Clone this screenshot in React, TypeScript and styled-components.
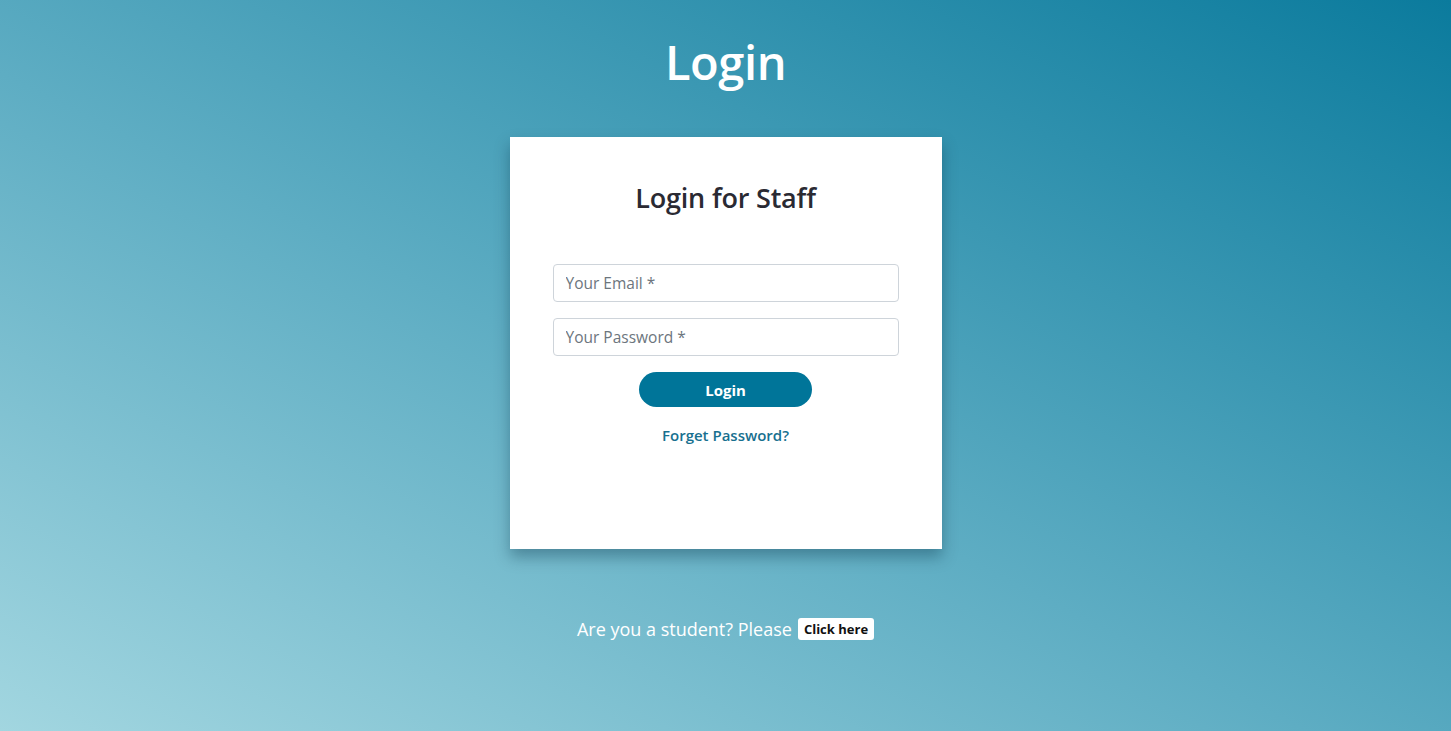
import React from 'react';
import styled, { createGlobalStyle } from 'styled-components';

const GlobalStyle = createGlobalStyle`
	html, body {
		margin: 0;
		padding: 0;
		height: 100%;
	}
	body {
		font-family: 'Open Sans', 'Noto Sans', sans-serif;
	}
	#root {
		min-height: 100vh;
	}
`;

const Page = styled.main`
	min-height: 100vh;
	box-sizing: border-box;
	background: linear-gradient(to top right, #a2d6e0 0%, #5eadc3 45%, #0b7b9d 100%);
	display: flex;
	flex-direction: column;
	align-items: center;
	padding-top: 31px;
`;

const Title = styled.h1`
	margin: 0;
	color: #fff;
	font-size: 47px;
	font-weight: 600;
	line-height: 62px;
	letter-spacing: -0.4px;
`;

const Card = styled.section`
	margin-top: 44px;
	width: 432px;
	height: 412px;
	box-sizing: border-box;
	background: #fff;
	box-shadow: 0 8px 14px rgba(0, 40, 60, 0.35);
	padding: 40px 43px 0;
	display: flex;
	flex-direction: column;
	align-items: center;
`;

const CardTitle = styled.h2`
	margin: 0 0 45px;
	color: #2a2a33;
	font-size: 27px;
	font-weight: 600;
	line-height: 42px;
	letter-spacing: -0.2px;
`;

const Form = styled.form`
	width: 100%;
	display: flex;
	flex-direction: column;
	align-items: center;
	gap: 16px;
`;

const Input = styled.input`
	width: 100%;
	height: 38px;
	box-sizing: border-box;
	border: 1px solid #ced4da;
	border-radius: 4px;
	padding: 0 12px;
	font-family: inherit;
	font-size: 15.5px;
	color: #495057;
	outline: none;

	&::placeholder {
		color: #6c757d;
	}
`;

const Button = styled.button`
	width: 173px;
	height: 35px;
	border: none;
	border-radius: 18px;
	background: #007599;
	color: #fff;
	font-family: inherit;
	font-size: 15px;
	font-weight: 700;
	cursor: pointer;
`;

const Forgot = styled.a`
	margin-top: 18px;
	color: #18708f;
	font-size: 15px;
	font-weight: 600;
	text-decoration: none;
`;

const Footer = styled.p`
	margin: 68px 0 0;
	color: #fff;
	font-size: 18px;
	display: flex;
	align-items: center;
	gap: 6px;
`;

const SmallButton = styled.button`
	background: #fff;
	border: none;
	border-radius: 3px;
	padding: 2px 6px;
	font-family: inherit;
	font-size: 13px;
	font-weight: 700;
	color: #111;
	cursor: pointer;
`;

export default function App() {
	return (
		<Page>
			<GlobalStyle />
			<Title>Login</Title>
			<Card>
				<CardTitle>Login for Staff</CardTitle>
				<Form onSubmit={e => e.preventDefault()}>
					<Input type="email" placeholder="Your Email *" />
					<Input type="password" placeholder="Your Password *" />
					<Button type="submit">Login</Button>
				</Form>
				<Forgot href="#">Forget Password?</Forgot>
			</Card>
			<Footer>
				Are you a student? Please <SmallButton>Click here</SmallButton>
			</Footer>
		</Page>
	);
}
